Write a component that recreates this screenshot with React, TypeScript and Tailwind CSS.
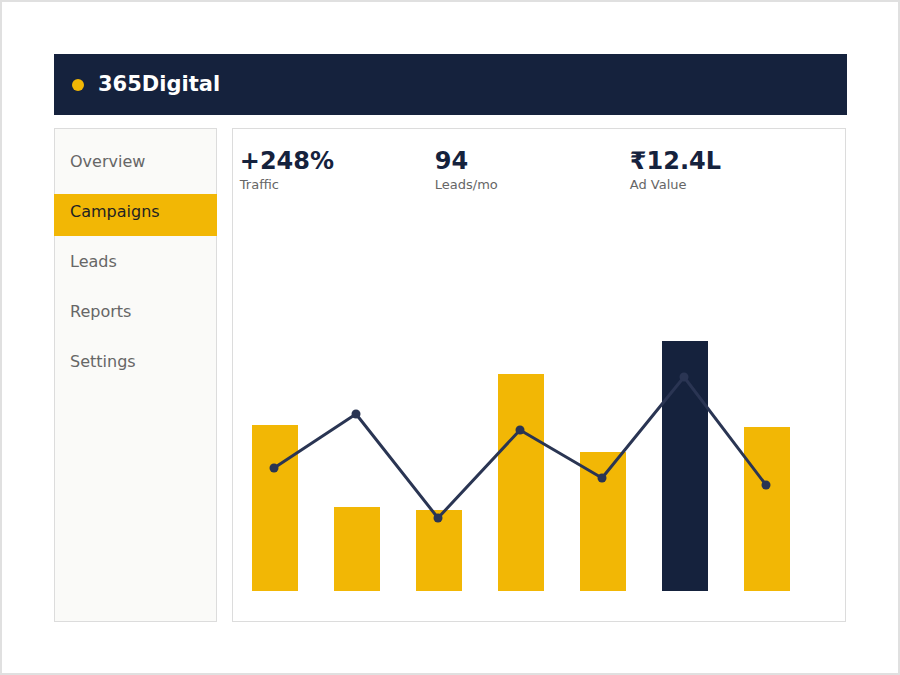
const navItems = ["Overview", "Campaigns", "Leads", "Reports", "Settings"];

const stats = [
  { value: "+248%", label: "Traffic" },
  { value: "94", label: "Leads/mo" },
  { value: "₹12.4L", label: "Ad Value" },
];

// bar tops in chart coordinates (baseline at 392)
const bars = [226, 308, 311, 175, 253, 142, 228];
const linePts = [269, 215, 319, 231, 279, 178, 286];
const highlight = 5;

function Chart() {
  const points = linePts.map((y, i) => `${41 + 82 * i},${y}`).join(" ");
  return (
    <svg width="612" height="420" viewBox="0 0 612 420" className="block">
      {bars.map((top, i) => (
        <rect
          key={i}
          x={19 + 82 * i}
          y={top}
          width={46}
          height={392 - top}
          fill={i === highlight ? "#15223d" : "#f2b705"}
        />
      ))}
      <polyline points={points} fill="none" stroke="#2a3553" strokeWidth="3" strokeLinejoin="round" />
      {linePts.map((y, i) => (
        <circle key={i} cx={41 + 82 * i} cy={y} r="4.5" fill="#2a3553" />
      ))}
    </svg>
  );
}

export default function App() {
  return (
    <div
      className="w-[900px] h-[675px] border-2 border-[#e0e0e0] bg-white pt-[52px] px-[52px]"
      style={{ fontFamily: '"DejaVu Sans", sans-serif' }}
    >
      <header className="h-[61px] w-[793px] bg-[#15223d] flex items-center pl-[18px] gap-[14px]">
        <span className="w-3 h-3 rounded-full bg-[#f2b705]" />
        <span className="text-white font-bold text-[21px] leading-none">365Digital</span>
      </header>

      <div className="flex mt-[13px] gap-[15px]">
        <nav className="w-[163px] h-[494px] bg-[#fafaf8] border border-[#dcdcdc] pt-[15px] flex flex-col gap-2">
          {navItems.map((item) => (
            <div
              key={item}
              className={
                item === "Campaigns"
                  ? "h-[42px] flex items-center text-[16px] bg-[#f2b705] text-[#222] -mx-px pl-[16px]"
                  : "h-[42px] flex items-center pl-[15px] text-[16px] text-[#666]"
              }
            >
              <span className="-mt-[6px]">{item}</span>
            </div>
          ))}
        </nav>

        <main className="w-[615px] h-[494px] bg-white border border-[#dcdcdc] flex flex-col">
          <div className="flex pl-[7px] pt-[18px] h-[70px]">
            {stats.map((s) => (
              <div key={s.label} className="w-[195px]">
                <div className="text-[24px] leading-[28px] font-bold text-[#15223d]">{s.value}</div>
                <div className="text-[13px] leading-[16px] text-[#666] mt-0.5">{s.label}</div>
              </div>
            ))}
          </div>
          <Chart />
        </main>
      </div>
    </div>
  );
}
